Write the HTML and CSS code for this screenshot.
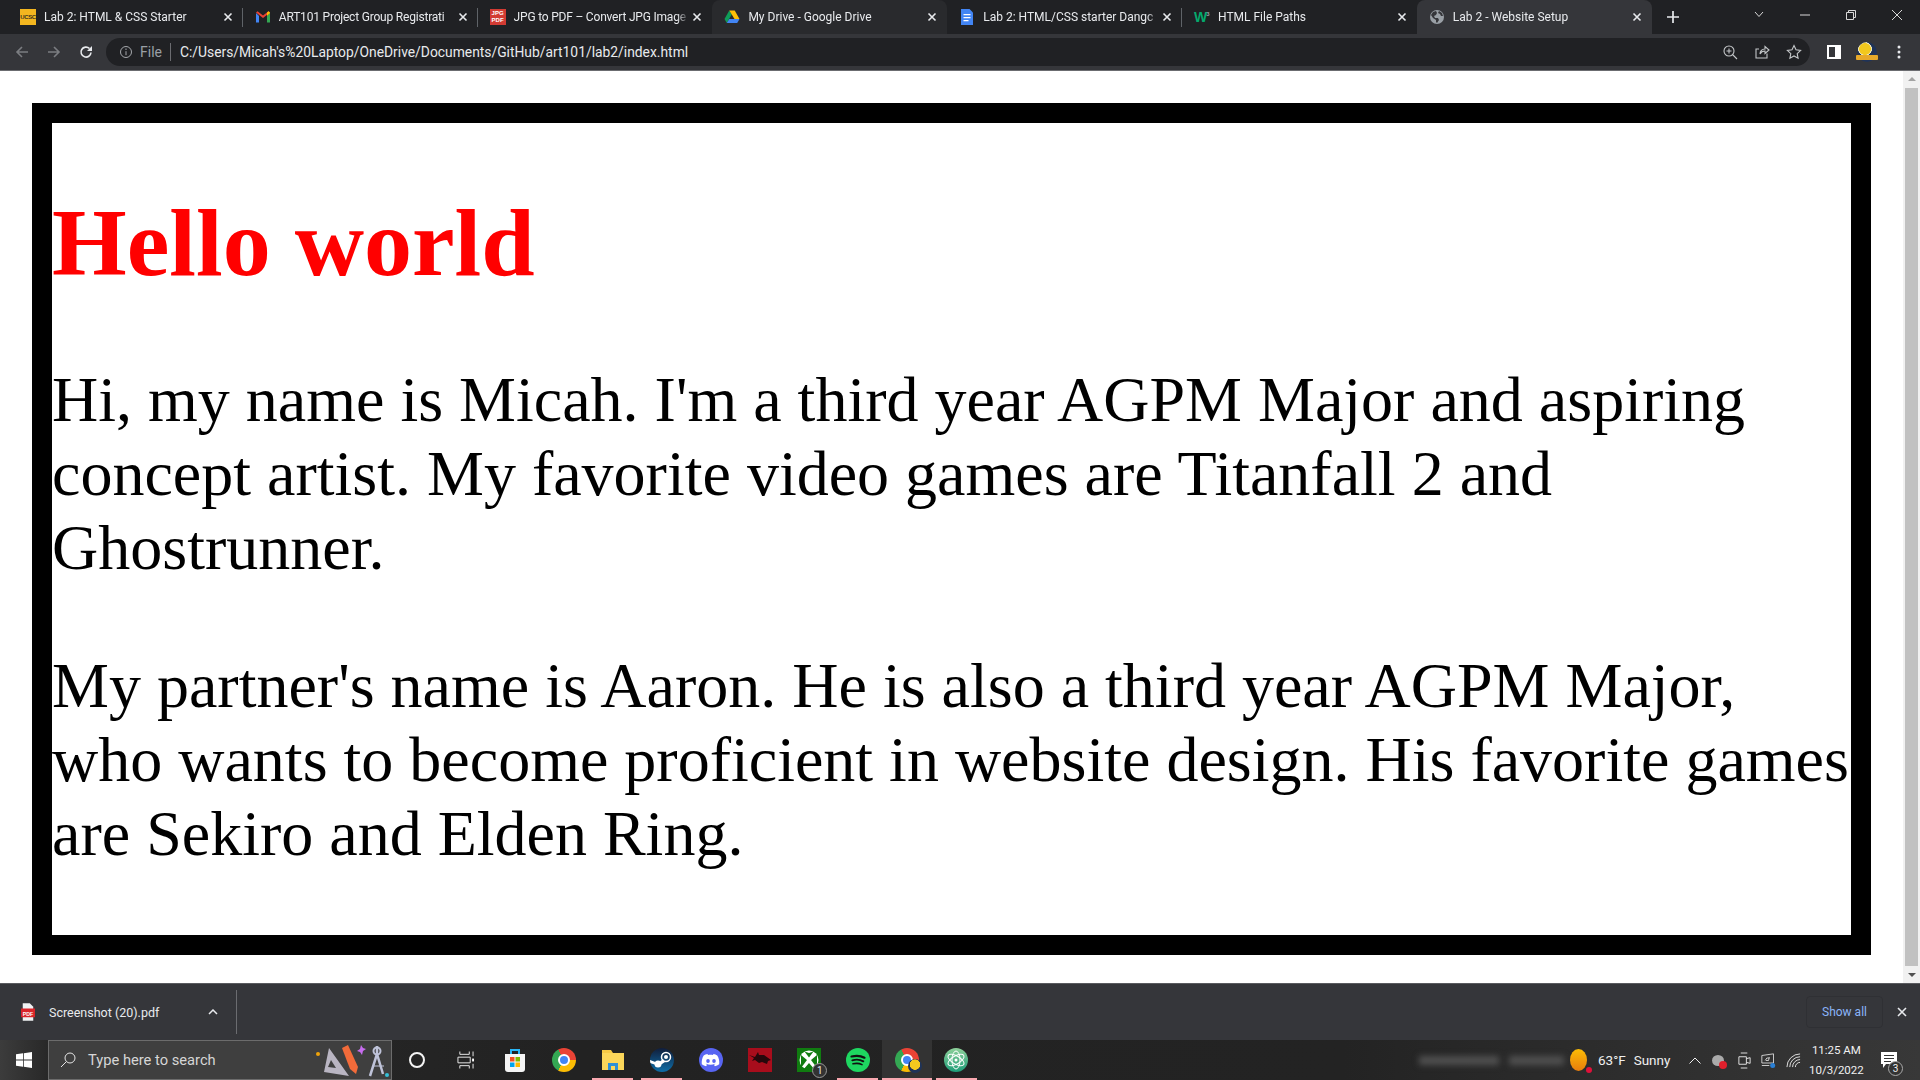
FILE: index.html
```html
<!DOCTYPE html>
<html>

<head>
    <meta charset="utf-8">
    <title>Lab 2 - Website Setup</title>
    <link rel="stylesheet" href="styles.css">
</head>

<body>
    <div class="tabstrip">
        <div class="tab sep-after">
            <span class="favicon ucsc">UCSC</span>
            <span class="tab-title">Lab 2: HTML &amp; CSS Starter</span>
            <svg class="tab-close" viewBox="0 0 10 10"><path d="M1.5 1.5l7 7M8.5 1.5l-7 7" /></svg>
        </div>
        <div class="tab sep-after">
            <svg class="favicon" viewBox="0 0 16 16">
                <path fill="#4285f4" d="M1 4v9.500h3V7z" />
                <path fill="#34a853" d="M12 7v6.500h3V4z" />
                <path fill="#ea4335" d="M1 3.500L8 9l7-5.500-1.500-1.200L8 6.500 2.500 2.300z" />
                <path fill="#fbbc04" d="M12 3.500v3.500l3-2.800V3.500l-1.500-1.200z" />
            </svg>
            <span class="tab-title tight">ART101 Project Group Registrati</span>
            <svg class="tab-close" viewBox="0 0 10 10"><path d="M1.5 1.500l7 7M8.500 1.500l-7 7" /></svg>
        </div>
        <div class="tab">
            <span class="favicon jpgpdf"><span>JPG</span><span>PDF</span></span>
            <span class="tab-title tight">JPG to PDF – Convert JPG Image</span>
            <svg class="tab-close" viewBox="0 0 10 10"><path d="M1.5 1.500l7 7M8.500 1.500l-7 7" /></svg>
        </div>
        <div class="tab tab-hover">
            <svg class="favicon" viewBox="0 0 16 16">
                <path fill="#0f9d58" d="M5.300 1.500L.5 10l2.300 4L7.700 5.500z" />
                <path fill="#ffc107" d="M5.300 1.500h5.400l4.800 8.500h-5z" />
                <path fill="#4285f4" d="M2.800 14h10.400l2.300-4H5.200z" />
            </svg>
            <span class="tab-title">My Drive - Google Drive</span>
            <svg class="tab-close" viewBox="0 0 10 10"><path d="M1.5 1.500l7 7M8.500 1.500l-7 7" /></svg>
        </div>
        <div class="tab sep-after">
            <svg class="favicon" viewBox="0 0 16 16">
                <path fill="#4285f4" d="M2 0h8.500L14 3.500V16H2z" />
                <path fill="#fff" d="M4.500 5h7v1.300h-7zM4.500 8h7v1.300h-7zM4.500 11h5v1.300h-5z" />
            </svg>
            <span class="tab-title">Lab 2: HTML/CSS starter Dangc</span>
            <svg class="tab-close" viewBox="0 0 10 10"><path d="M1.5 1.500l7 7M8.500 1.500l-7 7" /></svg>
        </div>
        <div class="tab">
            <span class="favicon wthree">W<sup>3</sup></span>
            <span class="tab-title">HTML File Paths</span>
            <svg class="tab-close" viewBox="0 0 10 10"><path d="M1.5 1.500l7 7M8.500 1.500l-7 7" /></svg>
        </div>
        <div class="tab tab-active">
            <svg class="favicon" viewBox="0 0 16 16">
                <circle cx="8" cy="8" r="7" fill="#9aa0a6" />
                <path fill="#35363a" d="M4 3l3-1 1 2-1 2-2 1 1 2 3 0 1 2-2 3-1-1 0-2-3-2-2-3zM10 2l3 2 1 3-2 0-1-2-2-1z" />
            </svg>
            <span class="tab-title">Lab 2 - Website Setup</span>
            <svg class="tab-close" viewBox="0 0 10 10"><path d="M1.5 1.500l7 7M8.500 1.500l-7 7" /></svg>
        </div>
        <svg class="new-tab" viewBox="0 0 12 12"><path d="M6 0v12M0 6h12" /></svg>
        <div class="window-btns">
            <svg viewBox="0 0 46 30"><path d="M19 12l4 4.500 4-4.500" /></svg>
            <svg viewBox="0 0 46 30"><path d="M18 15h10" /></svg>
            <svg viewBox="0 0 46 30"><path d="M18.500 12.500h7v7h-7zM20.500 12.500v-2h7v7h-2" /></svg>
            <svg viewBox="0 0 46 30"><path d="M18 10l10 10M28 10L18 20" /></svg>
        </div>
    </div>

    <div class="toolbar">
        <svg class="tool-btn dim" viewBox="0 0 16 16"><path d="M14 8H3M8 3L3 8l5 5" /></svg>
        <svg class="tool-btn dim" viewBox="0 0 16 16"><path d="M2 8h11M8 3l5 5-5 5" /></svg>
        <svg class="tool-btn" viewBox="0 0 16 16"><path d="M13 8.500A5 5 0 1 1 11.500 4.500" /><path class="solid" d="M14 2v5H9z" /></svg>
        <div class="omnibox">
            <svg class="info" viewBox="0 0 14 14"><circle cx="7" cy="7" r="5.500" /><path d="M7 6.200v4M7 3.500v1.500" /></svg>
            <span class="scheme">File</span>
            <span class="url">C:/Users/Micah's%20Laptop/OneDrive/Documents/GitHub/art101/lab2/index.html</span>
            <svg class="omni-icon" viewBox="0 0 16 16"><circle cx="7" cy="7" r="5" /><path d="M10.500 10.500L15 15M7 4.500v5M4.500 7h5" /></svg>
            <svg class="omni-icon" viewBox="0 0 16 16"><path d="M13 9.500V14H2V5h3M6 10c0-3 2-5 5-5V2.500L15 6l-4 3.500V7c-2 0-4 1-5 3z" /></svg>
            <svg class="omni-icon" viewBox="0 0 16 16"><path d="M8 1.500l2 4.300 4.600.6-3.400 3.200.9 4.700L8 12l-4.100 2.300.9-4.700L1.400 6.400 6 5.800z" /></svg>
        </div>
        <svg class="side-panel" viewBox="0 0 14 14"><path fill="#fff" fill-rule="evenodd" d="M0 0h14v14H0zM2 2v10h6V2z" /></svg>
        <span class="avatar"><span class="avatar-ribbon"></span></span>
        <svg class="menu-dots" viewBox="0 0 4 16"><circle cx="2" cy="3" r="1.500" /><circle cx="2" cy="8" r="1.500" /><circle cx="2" cy="13" r="1.500" /></svg>
    </div>

    <div class="viewport">
        <div class="page">
            <div class="page-box">
                <h1>Hello world</h1>
                <p>Hi, my name is Micah. I'm a third year AGPM Major and aspiring concept artist. My favorite video games are Titanfall 2 and Ghostrunner.</p>
                <p>My partner's name is Aaron. He is also a third year AGPM Major, who wants to become proficient in website design. His favorite games are Sekiro and Elden Ring.</p>
            </div>
        </div>
        <div class="scrollbar">
            <span class="arrow-up"></span>
            <span class="thumb"></span>
            <span class="arrow-down"></span>
        </div>
    </div>

    <div class="downloads">
        <svg class="pdf-icon" viewBox="0 0 16 20">
            <path fill="#f1f3f4" d="M2 0h8l4 4v16H2z" />
            <rect x="0" y="6" width="16" height="10" fill="#d9252a" />
            <text x="8" y="14" class="pdf-text">PDF</text>
        </svg>
        <span class="file-name">Screenshot (20).pdf</span>
        <svg class="file-chevron" viewBox="0 0 10 6"><path d="M1 5l4-4 4 4" /></svg>
        <span class="download-sep"></span>
        <span class="show-all">Show all</span>
        <svg class="download-close" viewBox="0 0 10 10"><path d="M1 1l8 8M9 1l-8 8" /></svg>
    </div>

    <div class="taskbar">
        <div class="start">
            <svg viewBox="0 0 16 16"><path fill="#fff" d="M0 2.300l7-1v6.300H0zM7.800 1.200L16 0v7.600H7.800zM0 8.400h7v6.300l-7-1zM7.800 8.400H16V16l-8.200-1.200z" /></svg>
        </div>
        <div class="searchbox">
            <svg class="glass" viewBox="0 0 16 16"><circle cx="10" cy="6" r="5" /><path d="M6.500 9.500L1 15" /></svg>
            <span class="search-text">Type here to search</span>
            <svg class="search-art" viewBox="0 0 76 36">
                <circle cx="3" cy="12" r="2" fill="#f0a30a" />
                <path fill="#b9b5c2" d="M14 6l20 28L9 30zM16 18l-3 7 8 1z" fill-rule="evenodd" />
                <path fill="#f26b3a" d="M27 6l6-3 10 22-2 7-6-5z" />
                <path fill="#c86df0" d="M46 3l2 3 3 1-3 2-1 4-2-3-3-1 3-2z" />
                <path fill="none" stroke="#bfc3d9" stroke-width="2.500" d="M55 34l7-22 6 20M62 12V4" />
                <circle cx="62" cy="9" r="3.500" fill="none" stroke="#bfc3d9" stroke-width="2" />
                <path fill="none" stroke="#bfc3d9" d="M58 24h11" />
                <circle cx="72" cy="33" r="2" fill="#35c0d8" />
            </svg>
        </div>
        <div class="app"><span class="cortana"></span></div>
        <div class="app">
            <svg class="task-view" viewBox="0 0 18 18"><path d="M3 0v3h10V0M1 6h13v6H1zM3 18v-3h10v3M17 0v5M17 13v5" /><rect x="16" y="7.500" width="2" height="3" fill="#fff" stroke="none" /></svg>
        </div>
        <div class="app">
            <svg class="app-icon" viewBox="0 0 24 24">
                <path fill="none" stroke="#29b6f6" stroke-width="2" d="M8 7V2h8v5" />
                <path fill="#f5f5f5" d="M2 6h20v15a3 3 0 0 1-3 3H5a3 3 0 0 1-3-3z" />
                <path fill="#f25022" d="M7 9h4.500v4.500H7z" /><path fill="#7fba00" d="M12.500 9H17v4.500h-4.500z" />
                <path fill="#00a4ef" d="M7 14.500h4.500V19H7z" /><path fill="#ffb900" d="M12.500 14.500H17V19h-4.500z" />
            </svg>
        </div>
        <div class="app"><span class="chrome"></span></div>
        <div class="app running">
            <svg class="app-icon" viewBox="0 0 24 24">
                <path fill="#f6c945" d="M1 2h9l2 3H1z" />
                <path fill="#fbd65a" d="M1 5h22v17H1z" />
                <path fill="#2e8fd6" d="M7 22v-7h10v7h-3v-4h-4v4z" />
            </svg>
        </div>
        <div class="app running">
            <span class="round-icon steam">
                <svg viewBox="0 0 24 24"><circle cx="16" cy="9" r="4.500" fill="none" stroke="#fff" stroke-width="1.500" /><circle cx="16" cy="9" r="2" fill="#fff" /><circle cx="8" cy="16" r="3.500" fill="#fff" /><path fill="#fff" d="M0 12l8 3 5-4 2 3-6 4-9-3z" /></svg>
            </span>
        </div>
        <div class="app">
            <span class="round-icon discord">
                <svg viewBox="0 0 24 24"><path fill="#fff" fill-rule="evenodd" d="M8.500 6c-1.500.2-2.800.7-3.800 1.400C3 10 2.500 13 2.800 16.300c1.400 1 2.800 1.700 4.300 2l1-1.500-1.500-.8.400-.3c3.100 1.400 6 1.400 9 0l.4.300-1.500.8 1 1.500c1.500-.3 2.900-1 4.300-2 .4-3.700-.4-6.700-2-8.900-1-.7-2.300-1.200-3.800-1.400l-.4.900c-1.700-.3-3.300-.3-5 0zM9 11a1.800 2 0 1 1 0 4 1.800 2 0 0 1 0-4zM15 11a1.800 2 0 1 1 0 4 1.800 2 0 0 1 0-4z" /></svg>
            </span>
        </div>
        <div class="app">
            <svg class="app-icon" viewBox="0 0 24 24">
                <path fill="#a80d1c" d="M0 0h24v24H0z" />
                <path fill="#26080c" d="M1 7l6 2 3-5 1 3 5 0 7 5-3 1-1 3-5-2-3 1-4-3-3 1 2-3z" />
            </svg>
        </div>
        <div class="app">
            <svg class="app-icon" viewBox="0 0 24 24">
                <path fill="#107c10" d="M0 0h24v24H0z" />
                <circle cx="12" cy="12" r="9.500" fill="#fff" />
                <path fill="#107c10" d="M12 9.500L7.500 3.500 12 5l4.500-1.500zM4 20l6-8-6-5zM20 20l-6-8 6-5zM6 22l6-7 6 7z" />
            </svg>
            <span class="xbox-badge">1</span>
        </div>
        <div class="app running">
            <span class="round-icon spotify">
                <svg viewBox="0 0 24 24"><path fill="none" stroke="#111" stroke-linecap="round" stroke-width="2.200" d="M5.500 8.500c4-1 9-1 13 1.200" /><path fill="none" stroke="#111" stroke-linecap="round" stroke-width="1.900" d="M6.300 12.300c3.500-1 8-.7 11 1" /><path fill="none" stroke="#111" stroke-linecap="round" stroke-width="1.600" d="M7 15.800c3-.7 6.500-.5 9 .8" /></svg>
            </span>
        </div>
        <div class="app running app-active">
            <span class="chrome"></span>
            <span class="chrome-profile"></span>
        </div>
        <div class="app running">
            <span class="round-icon atom">
                <svg viewBox="0 0 24 24">
                    <g fill="none" stroke="#fff" stroke-width="1"><ellipse cx="12" cy="12" rx="4" ry="9" /><ellipse cx="12" cy="12" rx="4" ry="9" transform="rotate(60 12 12)" /><ellipse cx="12" cy="12" rx="4" ry="9" transform="rotate(120 12 12)" /></g>
                    <circle cx="12" cy="12" r="1.500" fill="#fff" />
                </svg>
            </span>
        </div>

        <div class="tray">
            <div class="smudge"><span></span><span></span></div>
            <span class="weather-icon"></span>
            <span class="weather-text">63°F</span>
            <span class="weather-text sunny">Sunny</span>
            <svg class="tray-chevron" viewBox="0 0 12 7"><path d="M.5 6.500L6 1l5.500 5.500" /></svg>
            <span class="tray-cloud"></span>
            <svg class="tray-icon tray-video" viewBox="0 0 16 18"><path d="M4 1h7M4 17h7M2 5h8v8H2zM10 7l4-1v6l-4-1" /></svg>
            <svg class="tray-icon" viewBox="0 0 18 18"><path d="M1 3l14-2v11H1zM1 15h9" /><path d="M5 9l2-3h3M10 5l-1 4H6" /><circle cx="14" cy="15" r="3" fill="#2a7fd4" stroke="none" /></svg>
            <svg class="tray-icon tray-wifi" viewBox="0 0 16 16"><path d="M1 15a14 14 0 0 1 14-14M4 15a11 11 0 0 1 11-11M7 15a8 8 0 0 1 8-8M10 15a5 5 0 0 1 5-5" /></svg>
            <div class="clock"><span>11:25 AM</span><span>10/3/2022</span></div>
            <div class="notify">
                <svg viewBox="0 0 16 16"><path fill="#fff" d="M0 0h16v12H5l-3 4v-4H0z" /><path stroke="#333" d="M3 3.500h10M3 6.500h10M3 9.500h7" /></svg>
                <span class="notify-badge">3</span>
            </div>
        </div>
    </div>
</body>

</html>
```

FILE: styles.css
```css
html {
    height: 100%;
}

body {
    height: 100vh;
    margin: 0;
    display: flex;
    flex-direction: column;
    overflow: hidden;
    font-family: Roboto, 'Liberation Sans', sans-serif;
    font-size: 12px;
    color: #e8eaed;
    background-color: #fff;
}

svg {
    display: block;
    flex: none;
    fill: none;
}

/* tabs */
.tabstrip {
    height: 34px;
    flex: none;
    display: flex;
    padding-left: 8px;
    background-color: #202124;
}

.tab {
    position: relative;
    width: 234.8px;
    flex: none;
    box-sizing: border-box;
    display: flex;
    align-items: center;
    padding: 0 8px 0 12px;
    border-radius: 8px 8px 0 0;
}

.tab.sep-after::after {
    content: '';
    position: absolute;
    right: 0;
    top: 8px;
    height: 19px;
    width: 1px;
    background-color: #5f6368;
}

.tab-hover {
    background-color: #292a2d;
}

.tab-active {
    background-color: #35363a;
}

.favicon {
    width: 16px;
    height: 16px;
    flex: none;
    margin-right: 8px;
}

.ucsc {
    background-color: #f3b61f;
    color: #3b3320;
    font-family: 'Liberation Sans', sans-serif;
    font-size: 6px;
    font-weight: bold;
    line-height: 16px;
    text-align: center;
    overflow: hidden;
    letter-spacing: -.4px;
}

.jpgpdf {
    display: flex;
    flex-direction: column;
    align-items: center;
    background-color: #d23b33;
    color: #fff;
    font-family: 'Liberation Sans', sans-serif;
    font-size: 6px;
    font-weight: bold;
    line-height: 7px;
    padding-top: 1px;
    box-sizing: border-box;
}

.wthree {
    color: #04aa6d;
    font-family: 'Liberation Sans', sans-serif;
    font-size: 14px;
    font-weight: bold;
    line-height: 16px;
    letter-spacing: -1px;
}

.wthree sup {
    font-size: 6px;
    line-height: 0;
    color: #9aa0a6;
    vertical-align: 6px;
}

.tab-title {
    flex: 1;
    min-width: 0;
    white-space: nowrap;
    overflow: hidden;
    -webkit-mask-image: linear-gradient(to left, transparent 0, #000 12px);
    mask-image: linear-gradient(to left, transparent 0, #000 12px);
}

.tab-title.tight {
    letter-spacing: -.2px;
}

.tab-close {
    width: 10px;
    height: 10px;
    flex: none;
    margin: 0 2px 0 3px;
    stroke: #e8eaed;
    stroke-width: 1.6;
}

.new-tab {
    width: 12px;
    height: 12px;
    margin: 11px 0 0 15px;
    stroke: #e8eaed;
    stroke-width: 1.7;
}

.window-btns {
    margin-left: auto;
    display: flex;
    align-self: flex-start;
}

.window-btns svg {
    width: 46px;
    height: 30px;
    stroke: #d8d8d8;
}

/* toolbar */
.toolbar {
    height: 36px;
    flex: none;
    display: flex;
    align-items: center;
    padding-left: 14px;
    background-color: #35363a;
    border-bottom: 1px solid #6b6c70;
}

.tool-btn {
    width: 16px;
    height: 16px;
    margin-right: 16px;
    stroke: #e8eaed;
    stroke-width: 1.6;
}

.tool-btn .solid {
    fill: #e8eaed;
    stroke: none;
}

.tool-btn.dim {
    stroke: #7b7d81;
}

.omnibox {
    width: 1704px;
    height: 28px;
    margin-left: -4px;
    box-sizing: border-box;
    display: flex;
    align-items: center;
    padding: 0 8px 0 13px;
    background-color: #202124;
    border-radius: 14px;
}

.info {
    width: 14px;
    height: 14px;
    stroke: #a5a8ac;
}

.scheme {
    margin-left: 7px;
    padding-right: 8px;
    color: #9aa0a6;
    border-right: 1px solid #6b6c70;
    line-height: 18px;
    font-size: 14px;
}

.url {
    margin-left: 9px;
    margin-right: auto;
    font-size: 13.85px;
}

.omni-icon {
    width: 16px;
    height: 16px;
    margin-left: 16px;
    stroke: #c4c7c9;
    stroke-width: 1.1;
}

.side-panel {
    width: 14px;
    height: 14px;
    margin-left: 17px;
}

.avatar {
    position: relative;
    width: 20px;
    height: 20px;
    margin-left: 16px;
    border-radius: 50%;
    background: radial-gradient(circle at 40% 35%, #f2c81e 0 32%, #e9e2b8 33% 38%, #1f3358 40%);
}

.avatar-ribbon {
    position: absolute;
    left: -1px;
    right: -1px;
    bottom: 2px;
    height: 5px;
    background-color: #e7a92a;
    border-radius: 1px;
}

.menu-dots {
    width: 4px;
    height: 16px;
    margin-left: 20px;
    fill: #e8eaed;
}

/* the page itself */
.viewport {
    flex: 1;
    min-height: 0;
    display: flex;
    overflow: hidden;
}

.page {
    flex: 1;
    min-width: 0;
    overflow: hidden;
}

.page-box {
    margin: 32px;
    border: 20px solid #000;
    color: #000;
    font-family: 'Liberation Serif', 'Times New Roman', serif;
    font-size: 64px;
    display: flow-root;
}

h1 {
    color: #f00;
    font-size: 96px;
    margin: 64px 0 65px;
}

.page-box p {
    margin: 64px 0;
}

.scrollbar {
    width: 17px;
    flex: none;
    display: flex;
    flex-direction: column;
    align-items: center;
    background-color: #f1f1f1;
}

.thumb {
    width: 13px;
    flex: 1;
    background-color: #c1c1c1;
}

.arrow-up,
.arrow-down {
    width: 0;
    height: 0;
    border-left: 4px solid transparent;
    border-right: 4px solid transparent;
}

.arrow-up {
    margin: 6px 0 7px;
    border-bottom: 4px solid #a3a3a3;
}

.arrow-down {
    margin: 7px 0 6px;
    border-top: 4px solid #505050;
}

/* download shelf */
.downloads {
    height: 57px;
    flex: none;
    box-sizing: border-box;
    display: flex;
    align-items: center;
    padding: 0 13px 0 21px;
    background-color: #35363a;
    border-top: 1px solid #5a5b5f;
}

.pdf-icon {
    width: 14px;
    height: 18px;
}

.pdf-text {
    fill: #fff;
    font-family: 'Liberation Sans', sans-serif;
    font-size: 6px;
    font-weight: bold;
    text-anchor: middle;
}

.file-name {
    margin-left: 14px;
    font-size: 12.5px;
}

.file-chevron {
    width: 10px;
    height: 6px;
    margin-left: 49px;
    stroke: #e8eaed;
    stroke-width: 1.5;
}

.download-sep {
    width: 1px;
    height: 44px;
    margin-left: 18px;
    background-color: #6b6c70;
}

.show-all {
    margin-left: auto;
    width: 77px;
    height: 32px;
    box-sizing: border-box;
    border: 1px solid #2f3034;
    border-radius: 4px;
    color: #8ab4f8;
    font-size: 12px;
    line-height: 30px;
    text-align: center;
}

.download-close {
    width: 10px;
    height: 10px;
    margin-left: 14px;
    stroke: #e8eaed;
    stroke-width: 1.6;
}

/* windows taskbar */
.taskbar {
    height: 40px;
    flex: none;
    display: flex;
    background: linear-gradient(to right, #2a2a2a 0, #222 30%, #232323 70%, #383838 100%);
}

.start {
    width: 48px;
    flex: none;
    display: flex;
    align-items: center;
    justify-content: center;
    background: linear-gradient(to right, #3c3c3c, #282828);
}

.start svg {
    width: 16px;
    height: 16px;
}

.searchbox {
    width: 344px;
    flex: none;
    box-sizing: border-box;
    display: flex;
    align-items: center;
    padding: 0 0 0 11px;
    background-color: #3f3f3f;
    border: 1px solid #6c6c6c;
    color: #d6d6d6;
    font-size: 14.7px;
}

.glass {
    width: 16px;
    height: 16px;
    stroke: #e6e6e6;
    stroke-width: 1;
}

.search-text {
    margin-left: 12px;
    margin-right: auto;
}

.search-art {
    width: 76px;
    height: 36px;
}

.app {
    position: relative;
    width: 49.05px;
    flex: none;
    box-sizing: border-box;
    display: flex;
    align-items: center;
    justify-content: center;
}

.app.running::after {
    content: '';
    position: absolute;
    left: 4px;
    right: 4px;
    bottom: 0;
    height: 2px;
    background-color: #f9a8b0;
}

.app-active {
    background-color: #333;
}

.app-active.running::after {
    left: 0;
    right: 0;
}

.cortana {
    width: 16px;
    height: 16px;
    box-sizing: border-box;
    border: 2px solid #f5f5f5;
    border-radius: 50%;
}

.task-view {
    width: 17px;
    height: 18px;
    stroke: #f0f0f0;
}

.app-icon {
    width: 24px;
    height: 24px;
}

.chrome {
    position: relative;
    width: 24px;
    height: 24px;
    border-radius: 50%;
    background: conic-gradient(from -30deg, #ea4335 0 120deg, #fbbc04 120deg 240deg, #34a853 240deg 360deg);
}

.chrome::after {
    content: '';
    position: absolute;
    left: 6px;
    top: 6px;
    width: 12px;
    height: 12px;
    box-sizing: border-box;
    border: 2px solid #fff;
    border-radius: 50%;
    background-color: #4285f4;
}

.chrome-profile {
    position: absolute;
    left: 26px;
    top: 19px;
    width: 14px;
    height: 14px;
    border-radius: 50%;
    background: radial-gradient(circle at 50% 40%, #f2c81e 0 45%, #1f3358 50%);
}

.round-icon {
    width: 24px;
    height: 24px;
    border-radius: 50%;
    overflow: hidden;
}

.round-icon svg {
    width: 24px;
    height: 24px;
}

.steam {
    background: linear-gradient(#111d3a, #0e6ea8);
}

.discord {
    background-color: #5865f2;
}

.spotify {
    background-color: #1ed760;
}

.atom {
    background: linear-gradient(#8fd19a, #1d9c78);
}

.xbox-badge {
    position: absolute;
    left: 28px;
    top: 23px;
    width: 15px;
    height: 15px;
    box-sizing: border-box;
    border: 1px solid #9a9a9a;
    border-radius: 50%;
    background-color: #333;
    color: #eee;
    font-size: 10px;
    line-height: 13px;
    text-align: center;
}

.tray {
    margin-left: auto;
    padding-right: 14px;
    display: flex;
    align-items: center;
    color: #f0f0f0;
}

.smudge {
    display: flex;
    gap: 10px;
    margin-right: 3px;
    filter: blur(3px);
}

.smudge span {
    width: 80px;
    height: 9px;
    background-color: #505050;
}

.smudge span + span {
    width: 55px;
}

.weather-icon {
    position: relative;
    width: 17px;
    height: 22px;
    margin-left: 3px;
    border-radius: 50%;
    background: linear-gradient(#fbbc05, #e87d0d);
}

.weather-icon::after {
    content: '';
    position: absolute;
    right: -5px;
    bottom: -2px;
    width: 6px;
    height: 6px;
    border-radius: 50%;
    background-color: #e0103a;
}

.weather-text {
    margin-left: 11px;
    font-size: 13.5px;
}

.sunny {
    margin-left: 8px;
}

.tray-chevron {
    width: 12px;
    height: 7px;
    margin-left: 19px;
    stroke: #f0f0f0;
}

.tray-cloud {
    position: relative;
    width: 12px;
    height: 11px;
    margin-left: 11px;
    border-radius: 50%;
    background-color: #aaa;
}

.tray-cloud::after {
    content: '';
    position: absolute;
    right: -3px;
    bottom: -3px;
    width: 8px;
    height: 8px;
    border-radius: 50%;
    background-color: #e0202c;
}

.tray-icon {
    width: 15px;
    height: 17px;
    margin-left: 9px;
    stroke: #e6e6e6;
}

.tray-video {
    margin-left: 12.5px;
}

.tray-wifi {
    margin-left: 10.5px;
}

.clock {
    display: flex;
    flex-direction: column;
    align-items: center;
    width: 62px;
    margin-left: 4px;
    font-size: 11.5px;
    line-height: 20px;
}

.notify {
    position: relative;
    width: 32px;
    height: 40px;
    margin-left: 6.6px;
    box-sizing: border-box;
    padding: 12px 0 0 7px;
}

.notify svg {
    width: 16px;
    height: 16px;
}

.notify-badge {
    position: absolute;
    left: 14px;
    top: 21px;
    width: 15px;
    height: 15px;
    box-sizing: border-box;
    border: 1px solid #aaa;
    border-radius: 50%;
    background-color: #333;
    font-size: 10px;
    line-height: 13px;
    text-align: center;
}
```
